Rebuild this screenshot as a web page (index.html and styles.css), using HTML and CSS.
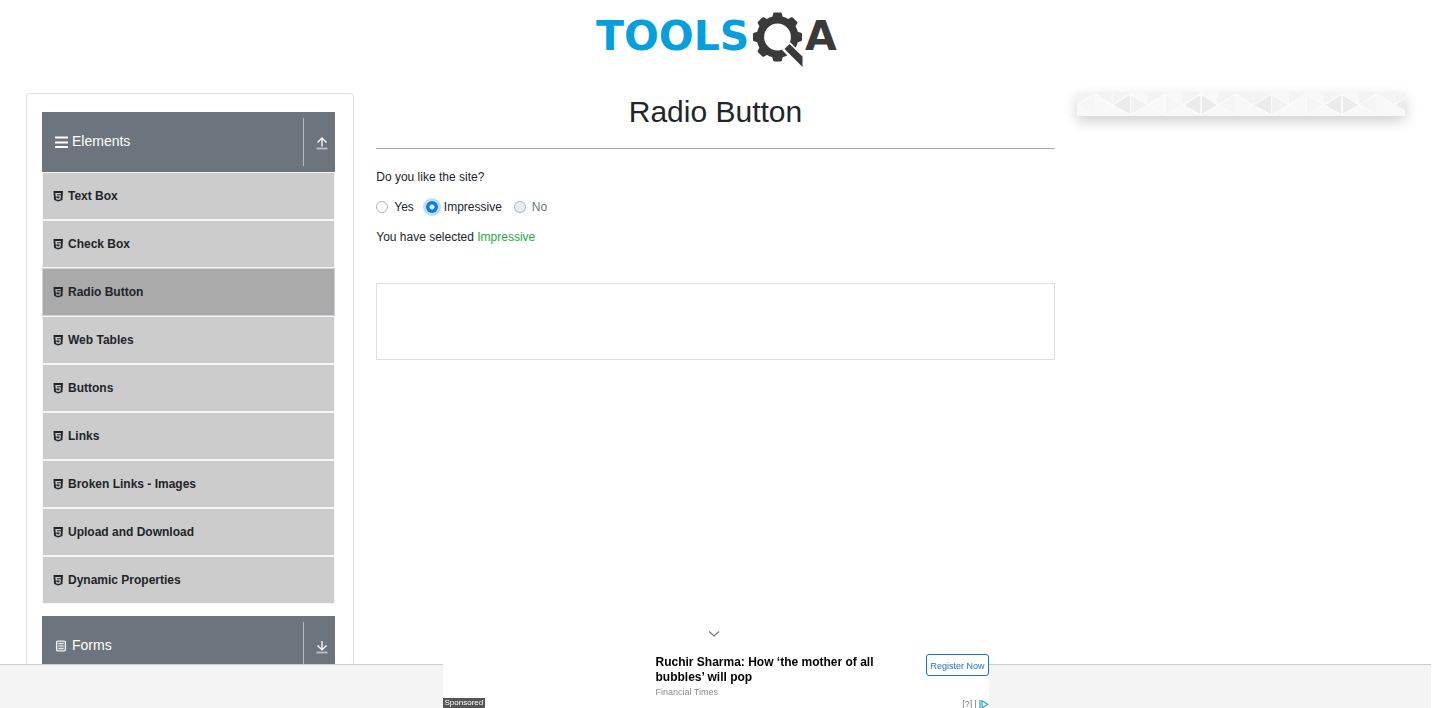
FILE: index.html
```html
<!DOCTYPE html>
<html lang="en">
<head>
<meta charset="utf-8">
<title>Radio Button</title>
<link rel="stylesheet" href="styles.css">
</head>
<body>
<svg class="defs" width="0" height="0" aria-hidden="true">
  <symbol id="html5" viewBox="0 0 12 12"><path fill-rule="evenodd" d="M1.500 1h9.500l-.6 8.900L6.200 11.400 2.100 9.900zM3.300 3l.3 3.500h4l-.2 1.700-1.100.4-1.200-.4-.1-.8H3.800l.2 1.800L6.300 10l2.200-.8.4-3.900H4.900l-.1-1H9L9.100 3z"/></symbol>
  <symbol id="up" viewBox="0 0 12 14"><path d="M6 10.500V2.500M1.500 6.500 6 2 10.500 6.500" fill="none" stroke="#fff" stroke-width="1.300"/><path d="M.5 12.500h11" stroke="#bdc1c6" stroke-width="1.800"/></symbol>
  <symbol id="down" viewBox="0 0 12 14"><path d="M6 1v8.500M1.500 5.500 6 9.800 10.500 5.500" fill="none" stroke="#fff" stroke-width="1.300"/><path d="M.5 12.500h11" stroke="#bdc1c6" stroke-width="1.800"/></symbol>
</svg>

<header class="site-header">
  <a href="#" aria-label="ToolsQA home">
    <svg class="logo" viewBox="588 8 256 62" width="256" height="62">
      <text class="logo-tools" x="596" y="50">TOOLS</text>
      <g fill="#3a3a3a">
        <circle cx="777.500" cy="37" r="17.200" fill="none" stroke="#3a3a3a" stroke-width="7.600"/>
        <path id="tooth" d="M772 18l1.200-4.500q.3-1 1.300-1h6q1 0 1.300 1L783 18z"/>
        <use href="#tooth" transform="rotate(45 777.500 37)"/>
        <use href="#tooth" transform="rotate(90 777.500 37)"/>
        <use href="#tooth" transform="rotate(180 777.500 37)"/>
        <use href="#tooth" transform="rotate(225 777.500 37)"/>
        <use href="#tooth" transform="rotate(270 777.500 37)"/>
        <use href="#tooth" transform="rotate(315 777.500 37)"/>
        <path d="M782 50l8-8 6 6-8 8z" fill="#fff"/>
        <path d="M784.500 49l5-5L802.500 56.500v10.500z"/>
      </g>
      <text class="logo-a" x="805" y="50">A</text>
    </svg>
  </a>
</header>

<div class="layout">
  <aside class="column">
    <nav class="card">
      <section class="group">
        <button class="group-head" type="button" aria-expanded="true">
          <svg class="group-icon" viewBox="0 0 14 14"><path d="M1 2.500h13M1 7.500h13M1 12h13" stroke="#fff" stroke-width="2"/></svg>
          <span class="group-title">Elements</span>
          <span class="toggle"><svg class="arrow"><use href="#up"/></svg></span>
        </button>
        <ul class="menu">
          <li><a class="item" href="#"><svg class="badge"><use href="#html5"/></svg>Text Box</a></li>
          <li><a class="item" href="#"><svg class="badge"><use href="#html5"/></svg>Check Box</a></li>
          <li><a class="item active" href="#" aria-current="page"><svg class="badge"><use href="#html5"/></svg>Radio Button</a></li>
          <li><a class="item" href="#"><svg class="badge"><use href="#html5"/></svg>Web Tables</a></li>
          <li><a class="item" href="#"><svg class="badge"><use href="#html5"/></svg>Buttons</a></li>
          <li><a class="item" href="#"><svg class="badge"><use href="#html5"/></svg>Links</a></li>
          <li><a class="item" href="#"><svg class="badge"><use href="#html5"/></svg>Broken Links - Images</a></li>
          <li><a class="item" href="#"><svg class="badge"><use href="#html5"/></svg>Upload and Download</a></li>
          <li><a class="item" href="#"><svg class="badge"><use href="#html5"/></svg>Dynamic Properties</a></li>
        </ul>
      </section>
      <section class="group">
        <button class="group-head" type="button" aria-expanded="false">
          <svg class="group-icon" viewBox="0 0 14 14"><rect x="2.500" y="2" width="9" height="10" rx="1.500" fill="#929aa1" stroke="#fff" stroke-width="1.100"/><path d="M4.500 4.500h5M4.500 7h5M4.500 9.500h5" stroke="#e4e6e8"/></svg>
          <span class="group-title">Forms</span>
          <span class="toggle"><svg class="arrow"><use href="#down"/></svg></span>
        </button>
      </section>
    </nav>
  </aside>

  <main class="column">
    <h1>Radio Button</h1>
    <form>
      <fieldset>
        <legend>Do you like the site?</legend>
        <div class="choices">
          <div class="choice"><input type="radio" name="like" id="yes"><label for="yes">Yes</label></div>
          <div class="choice"><input type="radio" name="like" id="impressive" checked><label for="impressive">Impressive</label></div>
          <div class="choice"><input type="radio" name="like" id="no" disabled><label for="no">No</label></div>
        </div>
      </fieldset>
      <p class="result">You have selected <span class="answer">Impressive</span></p>
    </form>
    <div class="ad-box"></div>
  </main>

  <aside class="column">
    <div class="banner">
      <svg width="100%" height="23">
        <defs>
          <pattern id="diamonds" width="141" height="23" patternUnits="userSpaceOnUse">
            <rect width="141" height="23" fill="#f8f8f8"/>
            <path d="M0 0h18L0 11zM36 0h17L36 11zM106 0h17l-17 11zM18 0l17 11V0zM71 0h17L71 11z" fill="#f3f3f3"/>
            <path d="M0 12 18 1v21zM89 1v21l17-10z" fill="#f5f5f5"/>
            <path d="M36 12 53 2v19z" fill="#ebebeb"/>
            <path d="M54 2v19l17-9z" fill="#f1f1f1"/>
            <path d="M107 12l16-10v19zM125 2v19l16-9z" fill="#ebebeb"/>
            <path d="M0 12 18 1 35 12 53 1 71 12 88 1l18 11 18-11 17 11M0 12l18 10 17-10 18 10 18-10 17 10 18-10 18 10 17-10M18 0v23M53.500 0v23M88.500 0v23M124 0v23" fill="none" stroke="#fbfbfb" stroke-width="1.200"/>
          </pattern>
        </defs>
        <rect width="100%" height="23" fill="url(#diamonds)"/>
      </svg>
    </div>
  </aside>
</div>

<footer class="dock">
  <div class="dock-bar"></div>
  <section class="ad" aria-label="Advertisement">
    <button class="collapse" type="button" aria-label="Collapse"><svg viewBox="0 0 12 8" width="12" height="8"><path d="M1 1.500l5 4.500 5-4.500" fill="none" stroke="#777" stroke-width="1.300"/></svg></button>
    <div class="ad-body">
      <div class="ad-media"><span class="sponsored">Sponsored</span></div>
      <div class="ad-copy">
        <a class="ad-title" href="#">Ruchir Sharma: How ‘the mother of all bubbles’ will pop</a>
        <span class="ad-source">Financial Times</span>
      </div>
      <div class="ad-side">
        <button class="register" type="button">Register Now</button>
        <div class="ad-info"><span>[?]</span><span>|</span><svg viewBox="0 0 10 10" width="10" height="10"><path d="M1 1v8M3 8.500V1.800L8.800 5.300 3 8.700" fill="none" stroke="#2aa5b8" stroke-width="1.200"/></svg></div>
      </div>
    </div>
  </section>
  <div class="dock-bar"></div>
</footer>
</body>
</html>
```

FILE: styles.css
```css
* { box-sizing: border-box; }

body {
  margin: 0;
  height: 100vh;
  padding-right: 9px;
  overflow: hidden;
  background: #fff;
  color: #212529;
  font: 12px/18px "Liberation Sans", Arial, sans-serif;
}

button { font: inherit; cursor: pointer; }
a { color: inherit; text-decoration: none; }
.defs { position: absolute; }

.site-header {
  display: flex;
  justify-content: center;
  padding: 8px 0 23px;
}
.logo { display: block; }
.logo-tools, .logo-a {
  font: bold 41px "DejaVu Sans", sans-serif;
  fill: #04a0dd;
}
.logo-a { fill: #3a3a3a; }

.layout {
  display: grid;
  grid-template-columns: 1fr 2fr 1fr;
  padding: 0 15px;
}
.column { padding: 0 11px; min-width: 0; }

.card {
  display: flex;
  flex-direction: column;
  gap: 12px;
  padding: 18px 18px 18px 15px;
  border: 1px solid #dfdfdf;
  border-radius: 4px;
}
.group-head {
  display: flex;
  align-items: center;
  width: 100%;
  height: 60px;
  padding: 6px 0 6px 12px;
  border: 0;
  background: #6c757d;
  color: #fff;
  font-size: 14px;
  text-align: left;
}
.group-icon { width: 14px; height: 14px; margin-right: 4px; }
.group-title { flex: 1; padding-bottom: 2px; }
.toggle {
  display: flex;
  align-items: center;
  align-self: stretch;
  width: 32px;
  padding: 2px 0 0 12px;
  border-left: 1px solid #b5babe;
}
.arrow { width: 12px; height: 14px; }

.menu { margin: 0; padding: 0; list-style: none; }
.item {
  display: flex;
  align-items: center;
  gap: 4px;
  height: 48px;
  padding: 0 9px;
  border: 1px solid #f4f5f6;
  background: #ccc;
  font-weight: bold;
}
.item.active { background: #aaa; border-color: #ced4da; }
.badge { width: 12px; height: 12px; fill: #212529; }

h1 {
  margin: 0 0 19px;
  padding-bottom: 18px;
  border-bottom: 1px solid #aaa;
  font-size: 30px;
  font-weight: normal;
  line-height: 37px;
  text-align: center;
}
fieldset { margin: 0; padding: 0; border: 0; }
legend { padding: 0; }
.choices { display: flex; gap: 12px; margin: 12px 0; }
.choice { display: flex; align-items: center; gap: 6px; }
.choice input {
  appearance: none;
  width: 12px;
  height: 12px;
  margin: 0;
  border: 1px solid #adb5bd;
  border-radius: 50%;
  background: #fff;
}
.choice input:checked {
  border: 0;
  background: radial-gradient(circle, #fff 2px, #007bff 3px);
  box-shadow: 0 0 0 3px #bfdeff;
}
.choice input:disabled { background: #e9ecef; }
.choice input:disabled + label { color: #6c757d; }
.result { margin: 0; }
.answer { color: #28a745; }
.ad-box { height: 77px; margin-top: 37px; border: 1px solid #dfdfdf; }

.banner { box-shadow: 0 5px 14px rgba(0, 0, 0, .2); }
.banner svg { display: block; }

.dock {
  position: fixed;
  left: 0;
  right: 9px;
  bottom: 0;
  display: flex;
  align-items: flex-end;
}
.dock-bar {
  flex: 1;
  height: 44px;
  border-top: 1px solid #ccc;
  background: #f4f4f4;
}
.ad { width: 546px; background: #fff; }
.collapse {
  display: block;
  margin: 0 auto;
  padding: 4px 4px 0 0;
  border: 0;
  background: none;
  line-height: 0;
}
.ad-body {
  display: grid;
  grid-template-columns: 213px 240px 1fr;
  padding-top: 16px;
}
.ad-media { display: flex; align-items: flex-end; }
.sponsored {
  padding: 0 2px;
  background: #555;
  color: #fff;
  font-size: 8px;
  line-height: 10px;
}
.ad-copy { padding: 1px 0 9px; }
.ad-title {
  display: block;
  color: #000;
  font-weight: bold;
  line-height: 15px;
}
.ad-source {
  display: block;
  color: #8c8c8c;
  font-size: 9px;
  line-height: 14px;
}
.ad-side {
  display: flex;
  flex-direction: column;
  align-items: flex-end;
  justify-content: space-between;
}
.register {
  height: 22px;
  padding: 2px 3px 0;
  border: 1px solid #1a6fd0;
  border-radius: 3px;
  background: #fff;
  color: #1a6fd0;
  font-size: 9px;
}
.ad-info {
  display: flex;
  align-items: center;
  gap: 2px;
  height: 9px;
  color: #777;
  font-size: 9px;
}
```
